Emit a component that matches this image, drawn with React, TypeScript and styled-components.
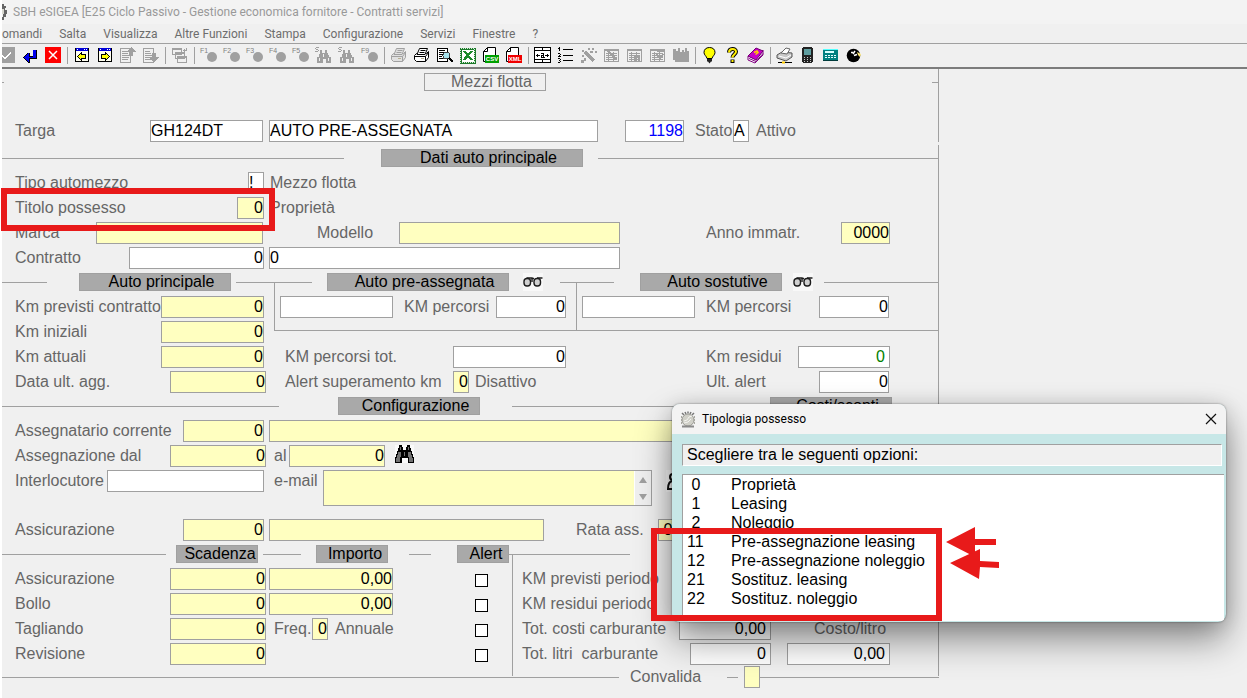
import React from 'react';
import styled, { createGlobalStyle, css } from 'styled-components';

const GlobalStyle = createGlobalStyle`
  *, *::before, *::after { box-sizing: border-box; }
  html, body { margin: 0; padding: 0; background: #ffffff; }
  body { font-family: "Liberation Sans", Arial, sans-serif; font-size: 16px; line-height: 18px; color: #666666; }
  button, input, textarea { font: inherit; margin: 0; }
  ul { list-style: none; margin: 0; padding: 0; }
`;

const line = '#a0a0a0';
const uiFont = '"Segoe UI", Roboto, "Open Sans", sans-serif';

/* ---------- window frame ---------- */

const Desktop = styled.div`
  position: relative;
  min-height: 100vh;
  padding-left: 2px;
  overflow: hidden;
`;

const Window = styled.div`
  min-height: 100vh;
  background: #f0f0f0;
`;

const TitleBar = styled.header`
  display: flex;
  align-items: center;
  gap: 6px;
  height: 24px;
  background: #f3f3f3;
  color: #999999;
  font: 12px/16px ${uiFont};
`;

const MenuBar = styled.nav`
  display: flex;
  gap: 17px;
  height: 20px;
  border-bottom: 1px solid ${line};
`;

const MenuItem = styled.button`
  border: 0;
  padding: 0;
  background: none;
  color: #6d6d6d;
  font: 12px/16px ${uiFont};
`;

const ToolBar = styled.div`
  display: flex;
  height: 25px;
  overflow: hidden;
  border-bottom: 2px solid #7c7c7c;
`;

const ToolGroup = styled.div`
  display: flex;
  flex: none;
  &:first-child { margin-left: -7px; }
  &:not(:last-child)::after {
    content: "";
    width: 1px;
    margin: 3px 2px 3px 3px;
    background: ${line};
  }
`;

const ToolButton = styled.button`
  display: flex;
  align-items: center;
  justify-content: center;
  width: 23px;
  height: 23px;
  padding: 0;
  border: 0;
  background: none;
`;

/* ---------- form ---------- */

const Form = styled.form`
  width: 100%;
  max-width: 937px;
`;

const Heading = styled.section`
  height: 73px;
  padding-top: 4px;
  border-right: 1px solid ${line};
`;

const HeadingTop = styled.div`
  display: flex;
  align-items: center;
  margin-bottom: 29px;
`;

const Sections = styled.div`
  margin-top: 3px;
  padding-top: 3px;
  border-right: 1px solid ${line};
`;

const SectionHead = styled.div`
  display: flex;
  align-items: center;
  height: 20px;
  margin-bottom: 4px;
`;

const Rule = styled.span<{ $w?: number; $ml?: number }>`
  flex: ${p => (p.$w ? 'none' : '1')};
  width: ${p => (p.$w ? `${p.$w}px` : 'auto')};
  height: 1px;
  margin-left: ${p => p.$ml ?? 0}px;
  background: ${line};
`;

const Tag = styled.h2<{ $w: number; $ml: number; $plain?: boolean }>`
  flex: none;
  width: ${p => p.$w}px;
  height: 18px;
  margin: 0 0 0 ${p => p.$ml}px;
  padding-left: ${p => (p.$w > 100 ? 13 : 6)}px;
  border: 1px solid ${line};
  background: ${p => (p.$plain ? 'transparent' : '#a9a9a9')};
  color: ${p => (p.$plain ? '#666666' : '#000000')};
  font-size: 16px;
  font-weight: 400;
  line-height: 16px;
  text-align: center;
  white-space: nowrap;
`;

const Row = styled.div<{ $tall?: boolean; $indent?: number }>`
  display: flex;
  align-items: flex-start;
  height: ${p => (p.$tall ? 49 : 25)}px;
  padding-left: ${p => p.$indent ?? 13}px;
`;

const cell = css<{ $w?: number; $ml?: number }>`
  flex: none;
  width: ${p => (p.$w ? `${p.$w}px` : 'auto')};
  height: 22px;
  margin-left: ${p => p.$ml ?? 0}px;
  line-height: 22px;
  white-space: pre;
`;

const Label = styled.label<{ $w?: number; $ml?: number }>`${cell}`;
const Note = styled.output<{ $w?: number; $ml?: number }>`${cell}`;

type Tone = 'white' | 'yellow';

const Input = styled.input<{ $w: number; $ml?: number; $tone?: Tone; $end?: number; $text?: string }>`
  ${cell}
  padding: 0 ${p => p.$end ?? 0}px 0 0;
  border: 1px solid ${line};
  border-radius: 0;
  outline: 0;
  background: ${p => (p.$tone === 'yellow' ? '#ffffc0' : '#ffffff')};
  color: ${p => p.$text ?? '#000000'};
  line-height: 20px;
  text-align: ${p => (p.$end === undefined ? 'left' : 'right')};
`;

const Check = styled.input.attrs({ type: 'checkbox' })`
  appearance: none;
  width: 13px;
  height: 13px;
  margin: 6px 24px 0 auto;
  border: 1px solid #000000;
  background: #ffffff;
`;

const IconButton = styled.button<{ $ml: number }>`
  display: flex;
  flex: none;
  margin: 0 0 0 ${p => p.$ml}px;
  padding: 0;
  border: 0;
  background: #f8f8f8;
`;

const Columns = styled.div`
  display: flex;
`;

const KmColumn = styled.div`
  flex: none;
  width: 272px;
`;

const KmDetail = styled.div`
  flex: 1;
`;

const Frames = styled.div`
  display: flex;
  margin: -14px 0 15px;
  border-bottom: 1px solid ${line};
`;

const Frame = styled.div<{ $w?: number }>`
  flex: ${p => (p.$w ? 'none' : '1')};
  width: ${p => (p.$w ? `${p.$w}px` : 'auto')};
  height: 48px;
  padding-top: 14px;
  border-left: 1px solid ${line};
`;

const MemoBox = styled.div`
  display: flex;
  flex: none;
  width: 329px;
  height: 36px;
  border: 1px solid ${line};
`;

const Memo = styled.textarea`
  flex: 1;
  min-width: 0;
  padding: 0;
  border: 0;
  border-right: 1px solid #ffffff;
  border-radius: 0;
  outline: 0;
  resize: none;
  background: #ffffc0;
  color: #000000;
`;

const MemoScroll = styled.div`
  display: flex;
  flex-direction: column;
  width: 16px;
`;

const ScrollButton = styled.button`
  display: flex;
  flex: 1;
  align-items: center;
  justify-content: center;
  padding: 0;
  border: 0;
  background: #f0f0f0;
`;

const DueColumn = styled.div`
  flex: none;
  width: 511px;
  margin-top: -14px;
  padding: 14px 0 8px;
  border-right: 1px solid ${line};
`;

const FuelColumn = styled.div`
  flex: 1;
`;

const Footer = styled.div`
  display: flex;
  align-items: center;
  height: 22px;
  margin-top: -10px;
`;

/* ---------- dialog ---------- */

const Dialog = styled.div`
  position: absolute;
  top: 404px;
  left: 672px;
  width: 554px;
  height: 218px;
  display: flex;
  flex-direction: column;
  overflow: hidden;
  border-radius: 8px;
  box-shadow: 0 0 2px rgba(0, 0, 0, 0.5), 0 18px 36px rgba(0, 0, 0, 0.42), 0 2px 20px rgba(0, 0, 0, 0.14);
  background: #c7e7e7;
  color: #000000;
`;

const DialogBar = styled.div`
  display: flex;
  flex: none;
  align-items: center;
  height: 30px;
  padding: 0 8px;
  gap: 6px;
  background: #f3f3f3;
`;

const DialogTitle = styled.h1`
  flex: 1;
  margin: 0;
  font: 400 12px/16px ${uiFont};
`;

const CloseButton = styled.button`
  display: flex;
  padding: 1px;
  border: 0;
  background: none;
`;

const Prompt = styled.p`
  flex: none;
  height: 22px;
  margin: 10px 4px 8px 10px;
  padding-left: 4px;
  border: 1px solid ${line};
  border-right-color: #ffffff;
  border-bottom-color: #ffffff;
  background: #f0f0f0;
  line-height: 20px;
`;

const OptionList = styled.ul`
  flex: 1;
  margin: 0 2px 1px 10px;
  border: 1px solid ${line};
  border-width: 1px 0 0 1px;
  background: #ffffff;
`;

const Option = styled.li`
  display: flex;
  height: 19px;
  padding-left: 4px;
  line-height: 20px;
  white-space: pre;
`;

const OptionCode = styled.span`
  width: 44px;
`;

/* ---------- red marks ---------- */

const Mark = styled.div<{ $x: number; $y: number; $w: number; $h: number }>`
  position: absolute;
  left: ${p => p.$x}px;
  top: ${p => p.$y}px;
  width: ${p => p.$w}px;
  height: ${p => p.$h}px;
  border: 6px solid #e81a1a;
  pointer-events: none;
`;

const Arrows = styled.svg`
  position: absolute;
  left: 945px;
  top: 526px;
  pointer-events: none;
`;

/* ---------- icons ---------- */

const Svg = ({ children, w = 17, h = 17 }: { children: React.ReactNode; w?: number; h?: number }) => (
  <svg width={w} height={h} viewBox={`0 0 ${w} ${h}`} fill="none" shapeRendering="crispEdges" aria-hidden="true">
    {children}
  </svg>
);

const Smooth = ({ children }: { children: React.ReactNode }) => (
  <svg width="17" height="17" viewBox="0 0 17 17" fill="none" aria-hidden="true">
    {children}
  </svg>
);

const G = '#a0a0a0';

const Glasses = () => (
  <svg width="20" height="18" viewBox="0 0 20 18" fill="#d0d0d0" stroke="#1c1c1c" strokeWidth="1.400" aria-hidden="true">
    <rect x="1" y="5.500" width="6.500" height="7.500" rx="3" />
    <rect x="11" y="5.500" width="6.500" height="7.500" rx="3" />
    <path d="M3.500 5h5.500v4M19.500 5H14M9 5.500h2" fill="none" />
  </svg>
);

const Binoculars = () => (
  <Svg w={19} h={18}>
    <path d="M0 0h19v18H0z" fill="#fafafa" />
    <path d="M4 0h3v2h1v3h3V2h1V0h3v3h1v3h1v3h1v3h1v6h-6v-5H7v5H0v-6h1V9h1V6h1V3h1z" fill="#000" />
    <path d="M3 7h3v5H5v5H1v-4h1v-3h1zM13 7h3v3h1v3h1v4h-4v-5h-1zM5 2h1v3H5zM13 2h1v3h-1zM9 7h1v4H9z" fill="#707070" />
  </Svg>
);

const Crest = () => (
  <svg width="16" height="17" viewBox="0 0 16 17" fill="none" stroke="#9a9a94" aria-hidden="true">
    <path d="M2 2l2 2M5 1l1 2M8 .500v2M11 1l-1 2M14 2l-2 2" stroke="#777" strokeWidth="1.500" />
    <circle cx="8" cy="9" r="6" fill="#d0d0c8" />
    <path d="M4 10l3-1 2-3 3-1M4 12l4-1 3-3" stroke="#f4f4f0" />
    <path d="M2 15.500h12" stroke="#8a8a8a" strokeWidth="2" />
    <path d="M1.500 5v9M14.500 5v9" stroke="#a8a8a0" strokeDasharray="2 1" />
  </svg>
);

const FKey = ({ n }: { n: string }) => (
  <svg width="19" height="17" viewBox="0 0 19 17" aria-hidden="true">
    <circle cx="13" cy="10" r="5" fill={G} />
    <text x="1" y="6" fontSize="7" fontFamily="Liberation Sans, sans-serif" fill="#808080">{n}</text>
  </svg>
);

const FindKey = () => (
  <Svg>
    <path d="M5 3h2v3h3V3h2v3h1v2h1v2h2v6h-5v-4H8v4H2v-6h2V7h1z" fill={G} />
    <path d="M4 11h1v3H4zM13 11h1v3h-1zM8 7h1v3H8z" fill="#f0f0f0" />
    <path d="M1 .500h3M.500 1v1M1 2.500h2M3.500 3v1M0 4.500h3" stroke={G} />
  </Svg>
);

const Printer = ({ c, f }: { c: string; f: string }) => (
  <Smooth>
    <path d="M1.500 8.500l2-2h10l2-2v6l-3 4h-9l-2-2z" fill={f} stroke={c} />
    <path d="M6.500 1.500h8l-2.500 6H4z" fill={f} stroke={c} />
    <path d="M7.500 3.500h5M6.500 5.500h5M1.500 9.500h11l3-4M12.500 9.500v5" stroke={c} />
    <path d="M8 11.500h3" stroke="#b8b090" />
  </Smooth>
);

const Page = ({ color, label }: { color: string; label: string }) => (
  <svg width="17" height="17" viewBox="0 0 17 17" aria-hidden="true">
    <path d="M1.500 14.500V4.500L5.500.500H13.500V14.500z" fill="#fff" stroke="#000" />
    <path d="M1.500 4.500h4v-4" fill="none" stroke="#000" />
    <path d="M3 8h14v8H3z" fill={color} />
    <text x="10" y="14" fontSize="6" fontWeight="700" textAnchor="middle" fontFamily="Liberation Sans, sans-serif" fill="#fff">{label}</text>
  </svg>
);

const WinArrow = ({ d }: { d: string }) => (
  <Svg>
    <path d="M2 1h14v14H2z" fill="#000" />
    <path d="M3 4h12v10H3z" fill="#fffff0" />
    <path d="M3 1h12v3H3z" fill="#0000d8" />
    <path d="M4 2h1v1H4zM11 2h1v1h-1zM13 2h1v1h-1z" fill="#fff" />
    <path d={d} fill="#ffff00" stroke="#000" />
  </Svg>
);

const GreyPage = ({ d }: { d: string }) => (
  <Svg>
    <path d="M1.500 1.500h10v14h-10zM3 4.500h5M3 6.500h6M3 8.500h7M3 10.500h7M3 12.500h6" stroke={G} />
    <path d={d} fill={G} />
  </Svg>
);

const GreyTable = ({ d }: { d: string }) => (
  <Svg>
    <path d="M1.500 2.500h14v12h-14zM1 3.500h15M3 6.500h11M3 8.500h11M3 10.500h11M3 12.500h11M5.500 5v9M10.500 5v9" stroke={G} />
    <path d={d} stroke={G} strokeWidth="2" />
  </Svg>
);

const toolGroups: [string, React.ReactNode][][] = [
  [
    ['Conferma', <Svg><path d="M0 0h17v16H0z" fill={G} /><path d="M4 8.500l3 3 6-6" stroke="#fff" strokeWidth="1.500" /></Svg>],
    ['Invio', <Svg><path d="M12 3h4v9H9v4H7L2 11v-1l5-4h2v3h3z" fill="#000" /><path d="M12 3h3v8H8v4H7l-4-4.500L7 6h1v4h4z" fill="#0000f0" /></Svg>],
    ['Esci', <Svg><path d="M1 0h16v16H1z" fill="#ff0000" /><path d="M5 4l8 8M13 4l-8 8" stroke="#fff" strokeWidth="1.500" shapeRendering="auto" /></Svg>],
  ],
  [
    ['Precedente', <WinArrow d="M4.500 9.500l4-4v2h4v4h-4v2z" />],
    ['Successivo', <WinArrow d="M13.500 9.500l-4-4v2h-4v4h4v2z" />],
    ['Pagina su', <GreyPage d="M12 0l5 5h-3v4h-4V5H7z" />],
    ['Pagina giù', <GreyPage d="M10 6h4v4h3l-5 6-5-6h3z" />],
  ],
  [
    ['Finestre', <Svg><path d="M1.500 1.500h9v6h-9zM1 2.500h9M4.500 5.500h9v6h-9zM4 6.500h9M6.500 9.500h9v6h-9zM6 10.500h9M12 3.500h4M13.500 2v3M15.500 1v2" stroke={G} fill="#f0f0f0" /></Svg>],
  ],
  [
    ['F1', <FKey n="F1" />],
    ['F2', <FKey n="F2" />],
    ['F3', <FKey n="F3" />],
    ['F4', <FKey n="F4" />],
    ['F5', <FKey n="F5" />],
    ['Cerca', <FindKey />],
    ['Cerca ancora', <FindKey />],
    ['F9', <FKey n="F9" />],
  ],
  [
    ['Imposta stampa', <Printer c={G} f="#e0e0e0" />],
    ['Stampa', <Printer c="#000" f="#fff" />],
    ['Anteprima', <Svg><path d="M1.500 1.500h10v13h-10z" fill="#fff" stroke="#000" /><path d="M3 3.500h6M3 5.500h7M3 7.500h4M3 9.500h3M3 11.500h5" stroke="#000" /><circle cx="10.500" cy="8.500" r="3.500" fill="#a8e4ee" stroke="#444" /><path d="M13 11l4 4" stroke="#000" strokeWidth="2" /></Svg>],
    ['Excel', <Svg><path d="M1.500 1.500h14v14h-14z" fill="#ffffff" stroke="#1c7a2a" strokeWidth="2" /><path d="M1.500 1.500h14v14h-14z" stroke="#d8ecd8" strokeDasharray="1 1" /><path d="M4 4h3l2 3 2-3h3l-4 4 4 5h-3l-2-3-2 3H4l3-5z" fill="#1c8a2a" /></Svg>],
    ['CSV', <Page color="#00a000" label="CSV" />],
    ['XML', <Page color="#f00000" label="XML" />],
  ],
  [
    ['Larghezza', <Svg><path d="M.500.500h16v15h-16z" fill="#fff" stroke="#000" /><path d="M1 3.500h15M1 12.500h15M8.500 1v3M8.500 12v3M2 8.500h4M11 8.500h4M3.500 7v3M13.500 7v3M7 6.500h3M9.500 7v4M7 10.500h4M7.500 8v3M8 8.500h2" stroke="#000" /></Svg>],
    ['Elenco', <Svg><path d="M6 2.500h10M6 8.500h10M6 13.500h10" stroke="#000" /><path d="M2.500 0v4M1 1.500h1M1 6.500h2M3.500 7v1M2.500 8v1M1 9.500h3M1 11.500h2M3.500 12v1M2 13.500h1M3.500 14v1M1 15.500h2" stroke="#000" /></Svg>],
    ['Procedura', <Svg><path d="M5 5l9 9" stroke={G} strokeWidth="3" /><path d="M1 16h3v-2h2v-3H4v2H1zM12 1h2v2h-2zM15 4h2v2h-2zM8 1h2v2H8zM10 4h3v2h-3zM2 3h2v2H2zM2 8h2v2H2z" fill={G} /></Svg>],
    ['Tabella', <GreyTable d="M5 4l9 9" />],
    ['Cerca tabella', <GreyTable d="M9 8v7M13 8v7M9 10h5" />],
    ['Filtro', <GreyTable d="M8 4h8M8 7l3 5M14 7l-3 5" />],
    ['Archivio', <Svg><path d="M1 2h3v2h2V1h2v4h2V3h2v2h1V1h2v3h2v11H3v-2H1z" fill={G} /></Svg>],
  ],
  [
    ['Suggerimento', <Smooth><path d="M8.500.500c3.500 0 5.500 2 5.500 5 0 2.500-2.500 3.500-3 6H6c-.500-2.500-3-3.500-3-6 0-3 2-5 5.500-5z" fill="#ffff00" stroke="#000" /><path d="M6 12h5v2.500h-1L8.500 16.500 7 14.500H6z" fill="#222" /></Smooth>],
    ['Aiuto', <Smooth><path d="M5 5.500C5 1 12 1 12 4.800 12 7 8.500 7.500 8.500 10.500M8.500 12.500v3.500" stroke="#000" strokeWidth="4" /><path d="M5 5.500C5 1 12 1 12 4.800 12 7 8.500 7.500 8.500 10.500M8.500 13v2" stroke="#ffee00" strokeWidth="2" /></Smooth>],
    ['Manuale', <Smooth><path d="M1 9v4l7 3 8-8V3l-7 9z" fill="#fff" stroke="#800080" /><path d="M1 9l8-8 7 3-7 9z" fill="#c800c8" stroke="#700070" /><path d="M2 11.500l7 3 7-8" stroke="#800080" /><path d="M7 5.500l3-1.500 1 1.500-2.500 2" stroke="#ffcc00" strokeWidth="1.500" /></Smooth>],
  ],
  [
    ['Stampante', <Smooth><path d="M1 8l5-3 10 1v4l-6 4-9-3z" fill="#c8c8c8" stroke="#555" /><path d="M5 6l5-5 4 1-3 5z" fill="#fff" stroke="#666" /><path d="M3 9l7 2 5-3" stroke="#fff" /><path d="M2 15.500h14" stroke="#000" /><path d="M6 15.500h3" stroke="#ffcc00" strokeWidth="2" /></Smooth>],
    ['Telefono', <Svg><path d="M4 0h9v1h1v14h-1v1H4v-1H3V1h1z" fill="#222" /><path d="M5 2h7v6H5z" fill="#5f9ea0" /><path d="M5 10.500h7M5 12.500h7M5 14.500h7" stroke="#ccc" strokeDasharray="1 2" /></Svg>],
    ['Calcolatrice', <Svg><path d="M1 2h15v11H1z" fill="#008080" /><path d="M1 2.500h15" stroke="#5ff" /><path d="M3 4h9v2H3z" fill="#d8ffff" /><path d="M3 8.500h11M3 10.500h11" stroke="#e8ffff" strokeDasharray="2 1" /><path d="M1 13.500h15" stroke="#003c3c" /></Svg>],
    ['Orologio', <Smooth><circle cx="8.500" cy="8.500" r="6.800" fill="#000" /><path d="M8 7l2-3M9 8.500l3-1M6 5.500h2" stroke="#fff" strokeWidth="1.500" /><path d="M12 5l4 2-1 3-2-2z" fill="#ffe97a" /></Smooth>],
  ],
];

const menus = ['omandi', 'Salta', 'Visualizza', 'Altre Funzioni', 'Stampa', 'Configurazione', 'Servizi', 'Finestre', '?'];

const options = [
  [' 0', 'Proprietà'],
  [' 1', 'Leasing'],
  [' 2', 'Noleggio'],
  ['11', 'Pre-assegnazione leasing'],
  ['12', 'Pre-assegnazione noleggio'],
  ['21', 'Sostituz. leasing'],
  ['22', 'Sostituz. noleggio'],
];

/* A caption followed by the entry box that it names. */
type FieldProps = {
  id: string;
  label: string;
  lw: number;
  w: number;
  ml?: number;
  value?: string;
  tone?: Tone;
  end?: number;
  text?: string;
};

const Field = ({ id, label, lw, w, ml, value = '', tone, end, text }: FieldProps) => (
  <>
    <Label htmlFor={id} $w={lw} $ml={ml}>{label}</Label>
    <Input id={id} $w={w} $tone={tone} $end={end} $text={text} defaultValue={value} />
  </>
);

export default function App() {
  return (
    <Desktop>
      <GlobalStyle />
      <Window>
        <TitleBar>
          <svg width="5" height="18" viewBox="0 0 5 18" aria-hidden="true">
            <path d="M0 1h2v2h2v2H3v2h2v4H4v3H2v3H0v-3h1v-3H0V9h2V6H0z" fill="#666" />
            <path d="M0 6h2v5H0z" fill="#d8d8d0" />
          </svg>
          SBH eSIGEA [E25 Ciclo Passivo - Gestione economica fornitore - Contratti servizi]
        </TitleBar>
        <MenuBar>
          {menus.map(m => <MenuItem key={m} type="button">{m}</MenuItem>)}
        </MenuBar>
        <ToolBar role="toolbar">
          {toolGroups.map((group, i) => (
            <ToolGroup key={i}>
              {group.map(([name, icon]) => (
                <ToolButton key={name} type="button" aria-label={name}>{icon}</ToolButton>
              ))}
            </ToolGroup>
          ))}
        </ToolBar>

        <Form>
          <Heading>
            <HeadingTop>
              <Rule $w={2} />
              <Tag $w={122} $ml={420} $plain>Mezzi flotta</Tag>
              <Rule $w={6} $ml={386} />
            </HeadingTop>
            <Row>
              <Field id="targa" label="Targa" lw={135} w={113} value="GH124DT" />
              <Input aria-label="Descrizione" $w={329} $ml={6} defaultValue="AUTO PRE-ASSEGNATA" />
              <Input aria-label="Codice" $w={59} $ml={27} $end={0} $text="#0000ff" defaultValue="1198" />
              <Field id="stato" label="Stato" ml={11} lw={38} w={16} value="A" />
              <Note $ml={7}>Attivo</Note>
            </Row>
          </Heading>

          <Sections>
            <SectionHead>
              <Rule $w={342} />
              <Tag $w={202} $ml={37}>Dati auto principale</Tag>
              <Rule $ml={15} />
            </SectionHead>
            <Row>
              <Field id="tipo" label="Tipo automezzo" lw={233} w={16} value="!" />
              <Note $ml={6}>Mezzo flotta</Note>
            </Row>
            <Row>
              <Field id="titolo" label="Titolo possesso" lw={222} w={27} tone="yellow" end={0} value="0" />
              <Note $ml={6}>Proprietà</Note>
            </Row>
            <Row>
              <Field id="marca" label="Marca" lw={81} w={167} tone="yellow" />
              <Field id="modello" label="Modello" ml={54} lw={82} w={221} tone="yellow" />
              <Field id="anno" label="Anno immatr." ml={86} lw={135} w={49} tone="yellow" end={0} value="0000" />
            </Row>
            <Row>
              <Field id="contratto" label="Contratto" lw={114} w={135} end={0} value="0" />
              <Input aria-label="Descrizione contratto" $w={351} $ml={5} defaultValue="0" />
            </Row>

            <SectionHead>
              <Rule $w={45} />
              <Tag $w={152} $ml={32}>Auto principale</Tag>
              <Rule $w={76} $ml={5} />
              <Tag $w={182} $ml={15}>Auto pre-assegnata</Tag>
              <IconButton type="button" aria-label="Vedi auto pre-assegnata" $ml={14}><Glasses /></IconButton>
              <Rule $w={54} $ml={17} />
              <Tag $w={142} $ml={26}>Auto sostutive</Tag>
              <IconButton type="button" aria-label="Vedi auto sostitutive" $ml={11}><Glasses /></IconButton>
              <Rule $ml={11} />
            </SectionHead>
            <Columns>
              <KmColumn>
                <Row><Field id="kmprev" label="Km previsti contratto" lw={146} w={103} tone="yellow" end={0} value="0" /></Row>
                <Row><Field id="kminiz" label="Km iniziali" lw={146} w={103} tone="yellow" end={0} value="0" /></Row>
                <Row><Field id="kmatt" label="Km attuali" lw={146} w={103} tone="yellow" end={0} value="0" /></Row>
                <Row><Field id="dataagg" label="Data ult. agg." lw={155} w={96} tone="yellow" end={0} value="0" /></Row>
              </KmColumn>
              <KmDetail>
                <Frames>
                  <Frame $w={302}>
                    <Row $indent={5}>
                      <Input aria-label="Auto pre-assegnata" $w={113} />
                      <Field id="kmpre" label="KM percorsi" ml={11} lw={92} w={70} end={0} value="0" />
                    </Row>
                  </Frame>
                  <Frame>
                    <Row $indent={5}>
                      <Input aria-label="Auto sostitutiva" $w={113} />
                      <Field id="kmsost" label="KM percorsi" ml={11} lw={113} w={70} end={0} value="0" />
                    </Row>
                  </Frame>
                </Frames>
                <Row $indent={11}>
                  <Field id="kmtot" label="KM percorsi tot." lw={168} w={113} end={0} value="0" />
                  <Field id="kmres" label="Km residui" ml={140} lw={92} w={92} end={4} text="#008000" value="0" />
                </Row>
                <Row $indent={11}>
                  <Field id="alertkm" label="Alert superamento km" lw={168} w={16} tone="yellow" end={0} value="0" />
                  <Note $w={231} $ml={6}>Disattivo</Note>
                  <Field id="ultalert" label="Ult. alert" lw={113} w={70} end={0} value="0" />
                </Row>
              </KmDetail>
            </Columns>

            <SectionHead>
              <Rule $w={277} />
              <Tag $w={142} $ml={59}>Configurazione</Tag>
              <Rule $ml={32} />
              <Tag $w={122} $ml={20}>Costi/sconti</Tag>
              <Rule $w={26} $ml={20} />
            </SectionHead>
            <Row>
              <Field id="assegn" label="Assegnatario corrente" lw={168} w={81} tone="yellow" end={0} value="0" />
              <Input aria-label="Nome assegnatario" $w={621} $ml={5} $tone="yellow" />
            </Row>
            <Row>
              <Field id="dal" label="Assegnazione dal" lw={155} w={96} tone="yellow" end={0} value="0" />
              <Field id="al" label="al" ml={8} lw={15} w={96} tone="yellow" end={0} value="0" />
              <IconButton type="button" aria-label="Cerca assegnazione" $ml={10}><Binoculars /></IconButton>
            </Row>
            <Row $tall>
              <Field id="interl" label="Interlocutore" lw={92} w={157} />
              <Label htmlFor="email" $w={49} $ml={10}>e-mail</Label>
              <MemoBox>
                <Memo id="email" />
                <MemoScroll>
                  <ScrollButton type="button" aria-label="Su"><svg width="8" height="6" aria-hidden="true"><path d="M4 0l4 6H0z" fill={G} /></svg></ScrollButton>
                  <ScrollButton type="button" aria-label="Giù"><svg width="8" height="6" aria-hidden="true"><path d="M4 6l4-6H0z" fill={G} /></svg></ScrollButton>
                </MemoScroll>
              </MemoBox>
              <IconButton type="button" aria-label="Contatto" $ml={14}>
                <svg width="18" height="22" viewBox="0 0 18 22" fill="none" stroke="#111" strokeWidth="2" aria-hidden="true">
                  <circle cx="7" cy="7" r="3" />
                  <path d="M2 19c0-5 2-8 5-8s6 3 6 8z" />
                </svg>
              </IconButton>
            </Row>
            <Row>
              <Field id="assic" label="Assicurazione" lw={168} w={81} tone="yellow" end={0} value="0" />
              <Input aria-label="Compagnia" $w={275} $ml={5} $tone="yellow" />
              <Field id="rata" label="Rata ass." ml={32} lw={82} w={113} tone="yellow" value=" 0,00" />
            </Row>

            <SectionHead>
              <Rule $w={164} />
              <Tag $w={82} $ml={10}>Scadenza</Tag>
              <Rule $w={38} $ml={5} />
              <Tag $w={72} $ml={15}>Importo</Tag>
              <Rule $w={22} $ml={21} />
              <Tag $w={52} $ml={26}>Alert</Tag>
              <Rule $w={121} />
            </SectionHead>
            <Columns>
              <DueColumn>
                <Row>
                  <Field id="scass" label="Assicurazione" lw={155} w={96} tone="yellow" end={0} value="0" />
                  <Input aria-label="Importo assicurazione" $w={124} $ml={3} $tone="yellow" $end={0} defaultValue="0,00" />
                  <Check aria-label="Alert assicurazione" />
                </Row>
                <Row>
                  <Field id="scbollo" label="Bollo" lw={155} w={96} tone="yellow" end={0} value="0" />
                  <Input aria-label="Importo bollo" $w={124} $ml={3} $tone="yellow" $end={0} defaultValue="0,00" />
                  <Check aria-label="Alert bollo" />
                </Row>
                <Row>
                  <Field id="sctagl" label="Tagliando" lw={155} w={96} tone="yellow" end={0} value="0" />
                  <Field id="freq" label="Freq." ml={8} lw={38} w={16} tone="yellow" end={0} value="0" />
                  <Note $ml={7}>Annuale</Note>
                  <Check aria-label="Alert tagliando" />
                </Row>
                <Row>
                  <Field id="screv" label="Revisione" lw={155} w={96} tone="yellow" end={0} value="0" />
                  <Check aria-label="Alert revisione" />
                </Row>
              </DueColumn>
              <FuelColumn>
                <Row $indent={9}><Note>KM previsti periodo</Note></Row>
                <Row $indent={9}><Note>KM residui periodo</Note></Row>
                <Row $indent={9}>
                  <Field id="costi" label="Tot. costi carburante" lw={157} w={92} end={4} value="0,00" />
                  <Note $ml={43}>Costo/litro</Note>
                </Row>
                <Row $indent={9}>
                  <Field id="litri" label="Tot. litri  carburante" lw={168} w={81} end={4} value="0" />
                  <Input aria-label="Costo/litro" $w={103} $ml={16} $end={4} defaultValue="0,00" />
                </Row>
              </FuelColumn>
            </Columns>
          </Sections>
          <Footer>
            <Rule $w={617} />
            <Label htmlFor="convalida" $w={97} $ml={11}>Convalida</Label>
            <Rule $w={11} />
            <Input id="convalida" $w={16} $ml={6} $tone="yellow" />
            <Rule />
          </Footer>
        </Form>
      </Window>

      <Dialog role="dialog" aria-labelledby="dialog-title">
        <DialogBar>
          <Crest />
          <DialogTitle id="dialog-title">Tipologia possesso</DialogTitle>
          <CloseButton type="button" aria-label="Chiudi">
            <svg width="12" height="12" viewBox="0 0 12 12" stroke="#111" strokeWidth="1.200" aria-hidden="true"><path d="M1 1l10 10M11 1L1 11" /></svg>
          </CloseButton>
        </DialogBar>
        <Prompt>Scegliere tra le seguenti opzioni:</Prompt>
        <OptionList role="listbox" aria-label="Opzioni">
          {options.map(([code, text]) => (
            <Option key={code} role="option"><OptionCode>{code}</OptionCode>{text}</Option>
          ))}
        </OptionList>
      </Dialog>

      <Mark $x={1} $y={188} $w={274} $h={43} />
      <Mark $x={651} $y={528} $w={291} $h={93} />
      <Arrows width="56" height="55" viewBox="0 0 56 55" fill="#e81a1a" aria-hidden="true">
        <path d="M1 16L30 1v12h21v6H30v12z" />
        <path d="M5 37L35 23v12l19 1v6l-19-1-1 12z" />
      </Arrows>
    </Desktop>
  );
}
